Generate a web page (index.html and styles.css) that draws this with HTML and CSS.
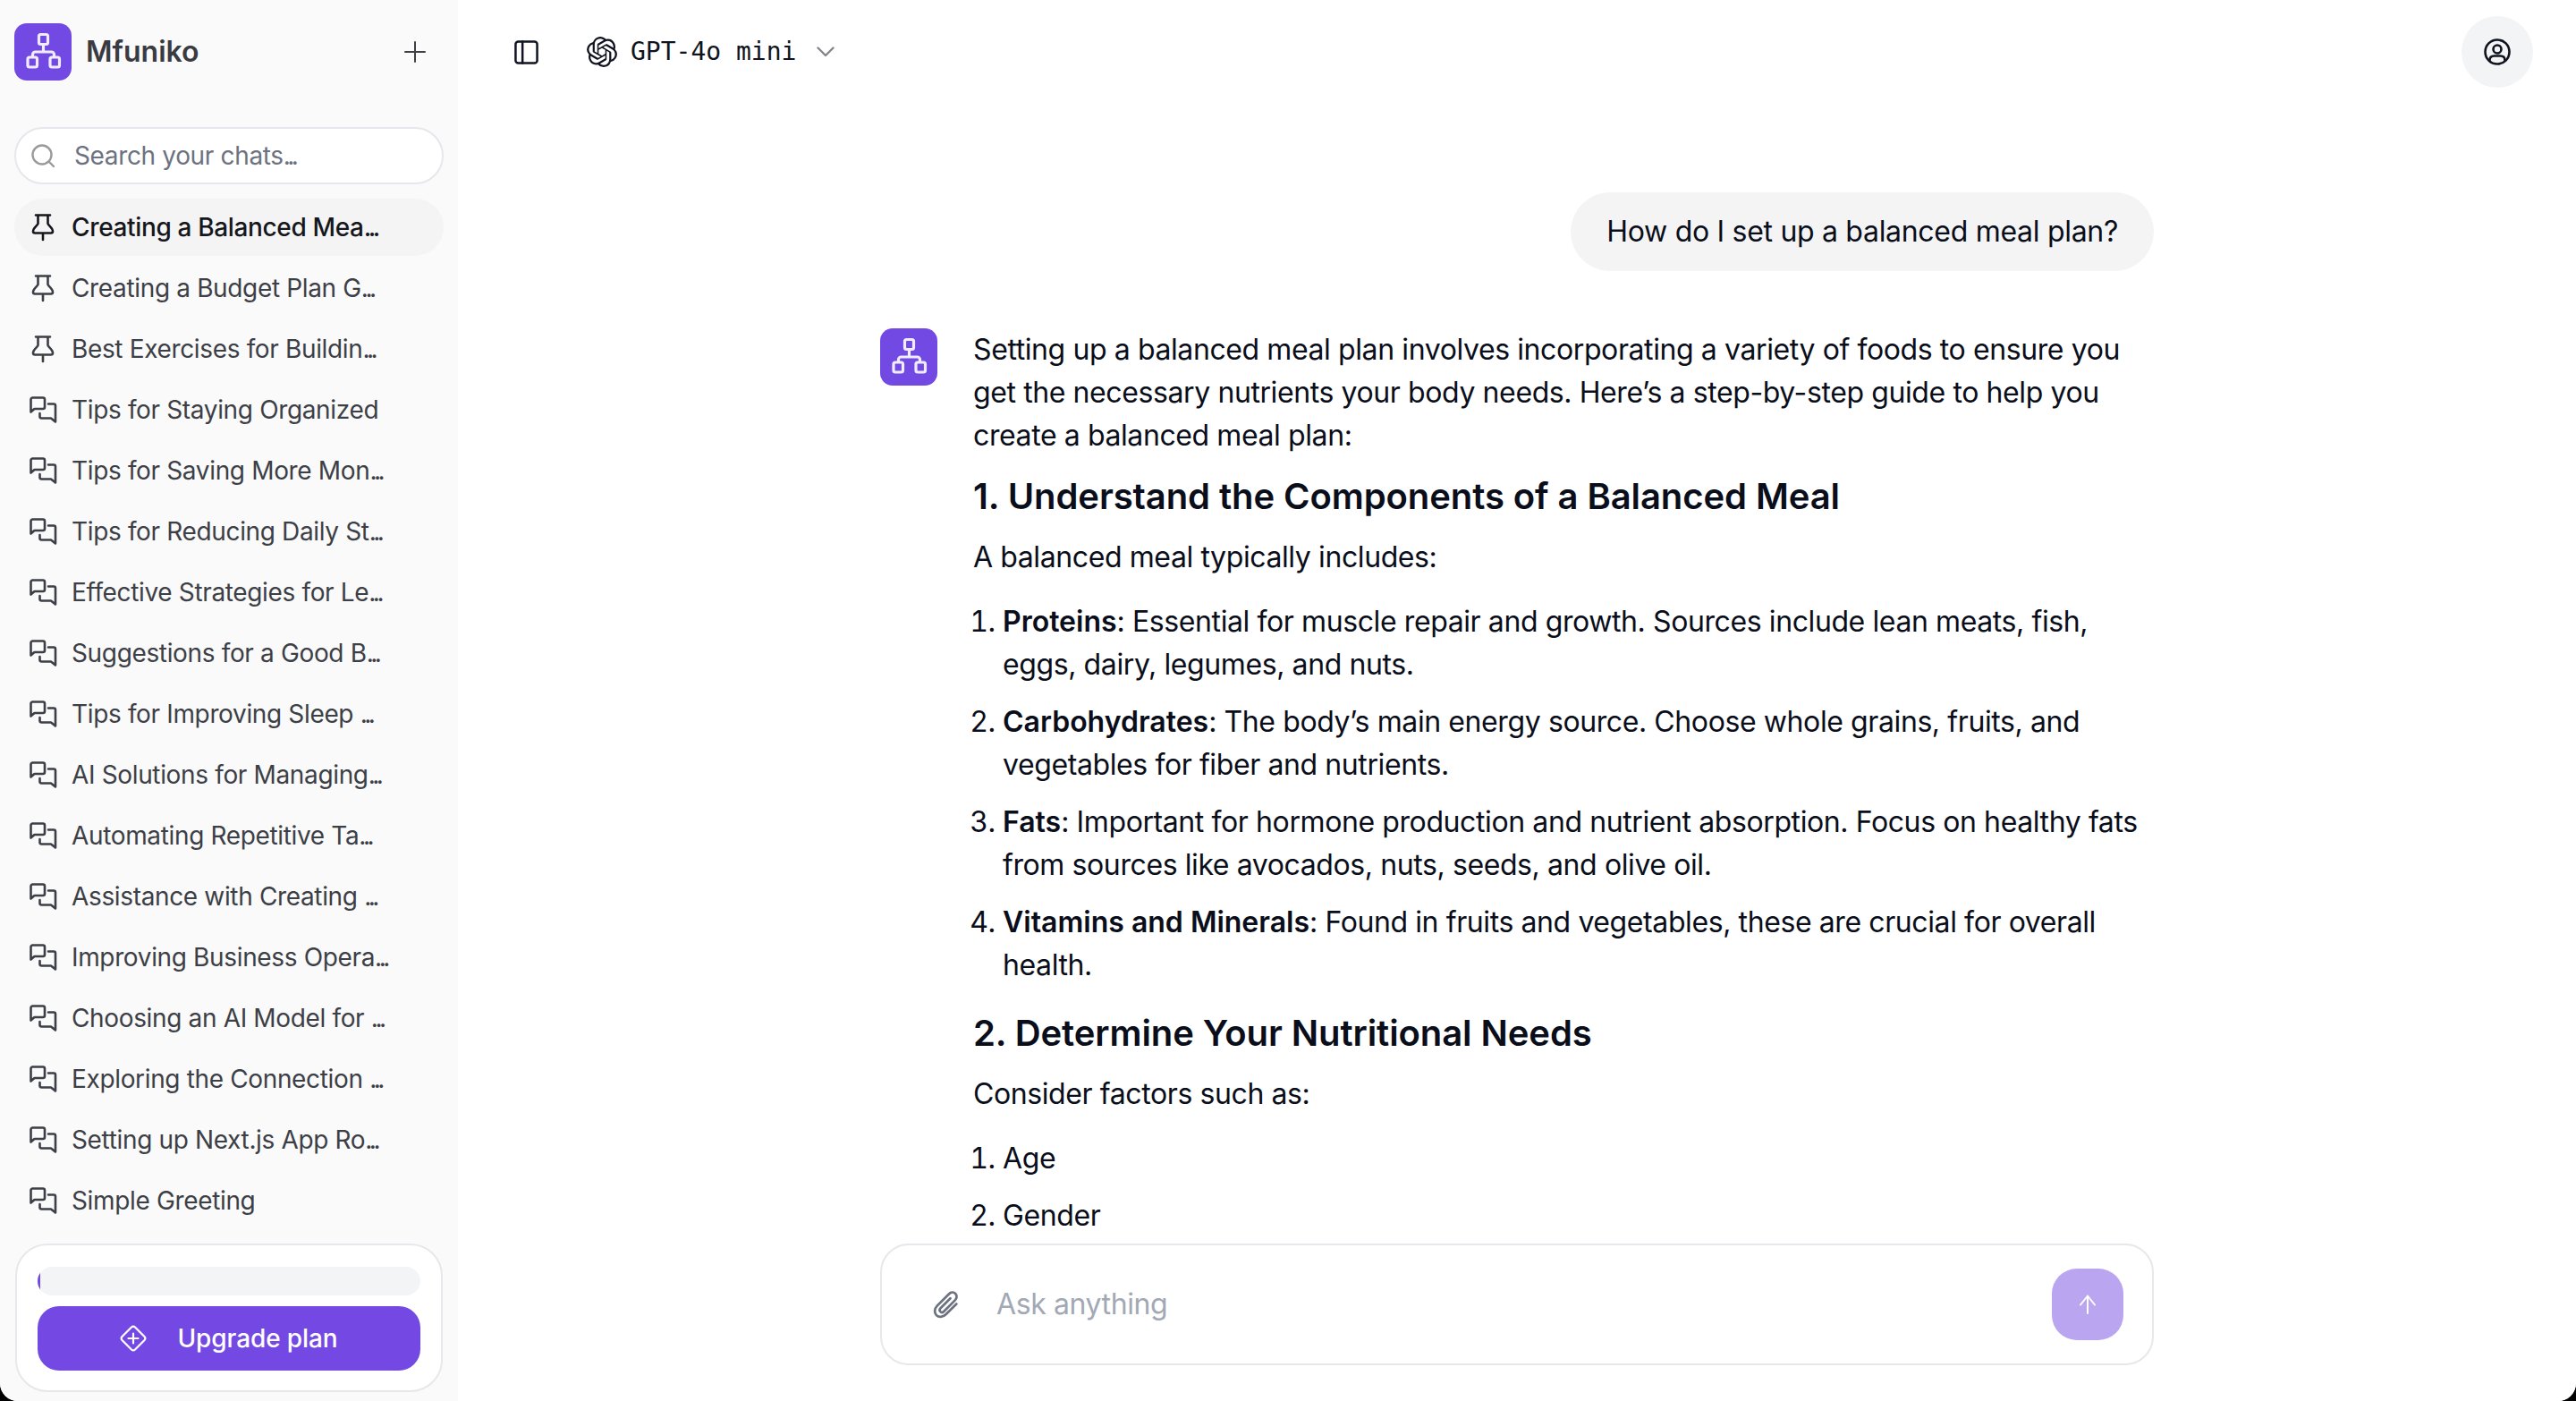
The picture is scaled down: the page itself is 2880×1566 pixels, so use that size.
FILE: index.html
```html
<!DOCTYPE html>
<html lang="en">
<head>
    <meta charset="UTF-8">
    <meta name="viewport" content="width=device-width, initial-scale=1.0">
    <title>Mfuniko</title>
    <link rel="stylesheet" href="styles.css">
</head>
<body>
    <svg class="defs" aria-hidden="true">
        <symbol id="pin" viewBox="0 0 32 32">
            <path d="M8 2.500h16M10.500 2.500v9.500c0 1.500-5.500 4.500-5.500 8.500 0 1.200.8 2 2 2h18c1.200 0 2-.8 2-2 0-4-5.500-7-5.500-8.500V2.500M16 22.500v7.500"/>
        </symbol>
        <symbol id="chat" viewBox="0 0 32 32">
            <path d="M2.500 18.500V4.500a2 2 0 0 1 2-2h11.500a2 2 0 0 1 2 2v8.500a2 2 0 0 1-2 2H6.500zM22 9.500h6a2 2 0 0 1 2 2v18l-5-4H14.500a2 2 0 0 1-2-2V20"/>
        </symbol>
        <symbol id="tree" viewBox="0 0 64 64">
            <path d="M27.500 14.500a2 2 0 0 1 2-2h6a2 2 0 0 1 2 2v7a2 2 0 0 1-2 2h-6a2 2 0 0 1-2-2zM15 40a2 2 0 0 1 2-2h6.500a2 2 0 0 1 2 2v7a2 2 0 0 1-2 2H17a2 2 0 0 1-2-2zM40 40a2 2 0 0 1 2-2h6.500a2 2 0 0 1 2 2v7a2 2 0 0 1-2 2H42a2 2 0 0 1-2-2zM32.500 23.500V32M20.500 38v-3a3 3 0 0 1 3-3h18a3 3 0 0 1 3 3v3"/>
        </symbol>
    </svg>

    <div class="app">
        <aside class="sidebar">
            <div class="brand">
                <span class="logo"><svg><use href="#tree"/></svg></span>
                <span class="brand-name">Mfuniko</span>
                <svg class="new-chat" viewBox="0 0 24 24"><path d="M12 1v22M1 12h22"/></svg>
            </div>

            <label class="search">
                <svg viewBox="0 0 28 28"><circle cx="13" cy="13" r="10.500"/><path d="M21 21l5 5"/></svg>
                <span>Search your chats<i>...</i></span>
            </label>

            <ul class="chats">
                <li class="chat active"><svg><use href="#pin"/></svg><span>Creating a Balanced Mea<i>...</i></span></li>
                <li class="chat"><svg><use href="#pin"/></svg><span>Creating a Budget Plan G<i>...</i></span></li>
                <li class="chat"><svg><use href="#pin"/></svg><span>Best Exercises for Buildin<i>...</i></span></li>
                <li class="chat"><svg><use href="#chat"/></svg><span>Tips for Staying Organized</span></li>
                <li class="chat"><svg><use href="#chat"/></svg><span>Tips for Saving More Mon<i>...</i></span></li>
                <li class="chat"><svg><use href="#chat"/></svg><span>Tips for Reducing Daily St<i>...</i></span></li>
                <li class="chat"><svg><use href="#chat"/></svg><span>Effective Strategies for Le<i>...</i></span></li>
                <li class="chat"><svg><use href="#chat"/></svg><span>Suggestions for a Good B<i>...</i></span></li>
                <li class="chat"><svg><use href="#chat"/></svg><span>Tips for Improving Sleep <i>...</i></span></li>
                <li class="chat"><svg><use href="#chat"/></svg><span>AI Solutions for Managing<i>...</i></span></li>
                <li class="chat"><svg><use href="#chat"/></svg><span>Automating Repetitive Ta<i>...</i></span></li>
                <li class="chat"><svg><use href="#chat"/></svg><span>Assistance with Creating <i>...</i></span></li>
                <li class="chat"><svg><use href="#chat"/></svg><span>Improving Business Opera<i>...</i></span></li>
                <li class="chat"><svg><use href="#chat"/></svg><span>Choosing an AI Model for <i>...</i></span></li>
                <li class="chat"><svg><use href="#chat"/></svg><span>Exploring the Connection <i>...</i></span></li>
                <li class="chat"><svg><use href="#chat"/></svg><span>Setting up Next.js App Ro<i>...</i></span></li>
                <li class="chat"><svg><use href="#chat"/></svg><span>Simple Greeting</span></li>
            </ul>

            <div class="upgrade">
                <div class="usage"><div class="usage-fill"></div></div>
                <button class="upgrade-btn">
                    <svg viewBox="0 0 30 30"><path d="M13 2.500a3 3 0 0 1 4 0L27.500 13a3 3 0 0 1 0 4L17 27.500a3 3 0 0 1-4 0L2.500 17a3 3 0 0 1 0-4zM15 9.500v11M9.500 15h11"/></svg>
                    Upgrade plan
                </button>
            </div>
        </aside>

        <main class="main">
            <header class="topbar">
                <svg class="panel-icon" viewBox="0 0 28 28"><rect x="1.500" y="1.500" width="25" height="25" rx="3"/><path d="M9.500 1.500v25"/></svg>
                <div class="model">
                    <svg viewBox="0 0 24 24"><path d="M22.2819 9.8211a5.9847 5.9847 0 0 0-.5157-4.9108 6.0462 6.0462 0 0 0-6.5098-2.9A6.0651 6.0651 0 0 0 4.9807 4.1818a5.9847 5.9847 0 0 0-3.9977 2.9 6.0462 6.0462 0 0 0 .7427 7.0966 5.98 5.98 0 0 0 .511 4.9107 6.051 6.051 0 0 0 6.5146 2.9001A5.9847 5.9847 0 0 0 13.2599 24a6.0557 6.0557 0 0 0 5.7718-4.2058 5.9894 5.9894 0 0 0 3.9977-2.9001 6.0557 6.0557 0 0 0-.7475-7.0729zm-9.022 12.6081a4.4755 4.4755 0 0 1-2.8764-1.0408l.1419-.0804 4.7783-2.7582a.7948.7948 0 0 0 .3927-.6813v-6.7369l2.02 1.1686a.071.071 0 0 1 .038.052v5.5826a4.504 4.504 0 0 1-4.4945 4.4944zm-9.6607-4.1254a4.4708 4.4708 0 0 1-.5346-3.0137l.142.0852 4.783 2.7582a.7712.7712 0 0 0 .7806 0l5.8428-3.3685v2.3324a.0804.0804 0 0 1-.0332.0615L9.74 19.9502a4.4992 4.4992 0 0 1-6.1408-1.6464zM2.3408 7.8956a4.485 4.485 0 0 1 2.3655-1.9728V11.6a.7664.7664 0 0 0 .3879.6765l5.8144 3.3543-2.0201 1.1685a.0757.0757 0 0 1-.071 0l-4.8303-2.7865A4.504 4.504 0 0 1 2.3408 7.872zm16.5963 3.8558L13.1038 8.364 15.1192 7.2a.0757.0757 0 0 1 .071 0l4.8303 2.7913a4.4944 4.4944 0 0 1-.6765 8.1042v-5.6772a.79.79 0 0 0-.407-.667zm2.0107-3.0231l-.142-.0852-4.7735-2.7818a.7759.7759 0 0 0-.7854 0L9.409 9.2297V6.8974a.0662.0662 0 0 1 .0284-.0615l4.8303-2.7866a4.4992 4.4992 0 0 1 6.6802 4.66zM8.3065 12.863l-2.02-1.1638a.0804.0804 0 0 1-.038-.0567V6.0742a4.4992 4.4992 0 0 1 7.3757-3.4537l-.142.0805L8.704 5.459a.7948.7948 0 0 0-.3927.6813zm1.0976-2.3654l2.602-1.4998 2.6069 1.4998v2.9994l-2.5974 1.4997-2.6067-1.4997Z"/></svg>
                    <span class="model-name">GPT-4o mini</span>
                    <svg class="chevron" viewBox="0 0 20 12"><path d="M1.500 1.500L10 10l8.500-8.500"/></svg>
                </div>
                <button class="account">
                    <svg viewBox="0 0 30 30"><circle cx="15" cy="15" r="13.500"/><circle cx="15" cy="12" r="4.500"/><path d="M6.500 24.500c0-3.500 2-5 5-5h7c3 0 5 1.500 5 5"/></svg>
                </button>
            </header>

            <section class="thread">
                <div class="column">
                    <div class="user-row"><div class="bubble">How do I set up a balanced meal plan?</div></div>
                    <div class="reply">
                        <span class="logo"><svg><use href="#tree"/></svg></span>
                        <div class="reply-text">
                            <p>Setting up a balanced meal plan involves incorporating a variety of foods to ensure you get the necessary nutrients your body needs. Here’s a step-by-step guide to help you create a balanced meal plan:</p>
                            <h3>1. Understand the Components of a Balanced Meal</h3>
                            <p>A balanced meal typically includes:</p>
                            <ol>
                                <li><strong>Proteins</strong>: Essential for muscle repair and growth. Sources include lean meats, fish, eggs, dairy, legumes, and nuts.</li>
                                <li><strong>Carbohydrates</strong>: The body’s main energy source. Choose whole grains, fruits, and vegetables for fiber and nutrients.</li>
                                <li><strong>Fats</strong>: Important for hormone production and nutrient absorption. Focus on healthy fats from sources like avocados, nuts, seeds, and olive oil.</li>
                                <li><strong>Vitamins and Minerals</strong>: Found in fruits and vegetables, these are crucial for overall health.</li>
                            </ol>
                            <h3>2. Determine Your Nutritional Needs</h3>
                            <p>Consider factors such as:</p>
                            <ol>
                                <li>Age</li>
                                <li>Gender</li>
                            </ol>
                        </div>
                    </div>
                </div>
            </section>

            <footer class="composer-wrap">
                <div class="composer">
                    <svg class="clip" viewBox="0 0 30 30"><path d="M25 14.500L14.500 25c-2.800 2.800-7 3-9.300.700s-2-6.500.700-9.300L17.500 4.800c1.900-1.900 4.800-2.100 6.500-.4s1.500 4.600-.4 6.500L12.500 22c-1 1-2.500 1.100-3.400.2s-.8-2.400.2-3.400L19 9"/></svg>
                    <span class="placeholder">Ask anything</span>
                    <button class="send">
                        <svg viewBox="0 0 24 24"><path d="M12 22V2.500M4 12.500l8-10 8 10"/></svg>
                    </button>
                </div>
            </footer>
        </main>
    </div>
</body>
</html>
```

FILE: styles.css
```css
* {
    box-sizing: border-box;
}

html, body {
    height: 100%;
    margin: 0;
    background-color: #000;
}

body {
    font-family: 'Inter', 'Liberation Sans', sans-serif;
    font-size: 32px;
    line-height: 48px;
    letter-spacing: -0.4px;
    color: #0a0e1a;
}

svg {
    display: block;
    fill: none;
    stroke: currentColor;
    stroke-linecap: round;
    stroke-linejoin: round;
}

button {
    font: inherit;
    letter-spacing: inherit;
    border: none;
    padding: 0;
}

.defs {
    display: none;
}

.app {
    display: flex;
    height: 100%;
    overflow: hidden;
    background-color: #fff;
    border-radius: 0 0 20px 20px;
}

/* sidebar */
.sidebar {
    width: 512px;
    flex-shrink: 0;
    display: flex;
    flex-direction: column;
    padding: 26px 16px 10px;
    background-color: #fafafa;
    letter-spacing: -0.35px;
}

/* the trailing dots sit tight together */
.sidebar i {
    font-style: normal;
    letter-spacing: -3.5px;
}

.brand {
    display: flex;
    align-items: center;
    height: 64px;
    margin-bottom: 52px;
}

.logo {
    display: block;
    width: 64px;
    height: 64px;
    flex-shrink: 0;
    border-radius: 14px;
    background-color: #7249e2;
    color: #f1ecfd;
}

.logo svg {
    width: 64px;
    height: 64px;
    stroke-width: 3.2;
}

.brand-name {
    margin-left: 16px;
    font-size: 32px;
    font-weight: 600;
    letter-spacing: 0;
    color: #3a3b42;
}

.new-chat {
    width: 24px;
    height: 24px;
    margin-left: auto;
    margin-right: 20px;
    color: #3f4046;
    stroke-width: 2;
}

.search {
    display: flex;
    align-items: center;
    gap: 21px;
    height: 64px;
    padding-left: 16px;
    border: 2px solid #e6e7ec;
    border-radius: 32px;
    background-color: #fff;
    font-size: 28px;
    color: #6c7280;
}

.search svg {
    width: 28px;
    height: 28px;
    color: #9a9a9a;
    stroke-width: 2.4;
}

.chats {
    list-style: none;
    margin: 16px 0 0;
    padding: 0;
    display: flex;
    flex-direction: column;
    gap: 4px;
    flex: 1;
    min-height: 0;
}

.chat {
    display: flex;
    align-items: center;
    gap: 16px;
    height: 64px;
    padding-left: 16px;
    border-radius: 32px;
    font-size: 28px;
    white-space: pre;
    color: #3d3f47;
}

.chat svg {
    width: 32px;
    height: 32px;
    stroke-width: 2.6;
}

.chat.active {
    background-color: #f4f4f5;
    font-weight: 500;
    color: #16171c;
}

.upgrade {
    height: 166px;
    padding: 24px 23px 0;
    border: 2px solid #e8e8ec;
    border-radius: 36px;
    background-color: #fff;
    margin: 0 1px;
}

.usage {
    height: 32px;
    border-radius: 16px;
    background-color: #f3f4f6;
    overflow: hidden;
}

.usage-fill {
    width: 3px;
    height: 100%;
    background-color: #7249e2;
}

.upgrade-btn {
    display: flex;
    align-items: center;
    justify-content: center;
    gap: 34px;
    width: 100%;
    height: 72px;
    margin-top: 12px;
    border-radius: 24px;
    background-color: #7449e3;
    color: #fff;
    font-size: 28px;
    font-weight: 500;
    letter-spacing: -0.1px;
}

.upgrade-btn svg {
    width: 30px;
    height: 30px;
    stroke-width: 2.2;
}

/* main column */
.main {
    flex: 1;
    min-width: 0;
    display: flex;
    flex-direction: column;
    background-color: #fff;
}

.topbar {
    display: flex;
    align-items: center;
    height: 116px;
    flex-shrink: 0;
    padding: 0 48px 0 63px;
    color: #0f1420;
}

.panel-icon {
    width: 27px;
    height: 27px;
    stroke-width: 2.6;
}

.model {
    display: flex;
    align-items: center;
    margin-left: 54px;
}

.model svg {
    width: 34px;
    height: 34px;
    fill: currentColor;
    stroke: none;
}

.model .chevron {
    width: 20px;
    height: 12px;
    margin-left: 23px;
    fill: none;
    stroke: #85868c;
    stroke-width: 2.4;
}

.model-name {
    margin-left: 15px;
    font-family: 'DejaVu Sans Mono', 'Liberation Mono', monospace;
    font-size: 28px;
    letter-spacing: 0;
}

.account {
    display: flex;
    align-items: center;
    justify-content: center;
    width: 80px;
    height: 80px;
    margin-left: auto;
    border-radius: 50%;
    background-color: #f3f4f6;
    color: #10141f;
}

.account svg {
    width: 30px;
    height: 30px;
    stroke-width: 2.6;
}

.thread {
    flex: 1;
    min-height: 0;
    overflow: hidden;
}

.column {
    width: 1424px;
    margin: 0 auto;
    padding-top: 99px;
}

.user-row {
    display: flex;
    justify-content: flex-end;
    margin-bottom: 64px;
}

.bubble {
    padding: 20px 40px;
    border-radius: 44px;
    background-color: #f4f4f5;
    letter-spacing: -0.3px;
}

.reply {
    display: flex;
    gap: 40px;
}

.reply-text p {
    margin: 0;
}

.reply-text h3 {
    margin: 16px 0;
    font-size: 40px;
    line-height: 56px;
    font-weight: 600;
    letter-spacing: -0.08px;
}

.reply-text ol {
    margin: 24px 0 0;
    padding-left: 33px;
}

.reply-text li + li {
    margin-top: 16px;
}

.reply-text ol + h3 {
    margin-top: 24px;
}

.reply-text strong {
    font-weight: 600;
    letter-spacing: 0;
}

.composer-wrap {
    flex-shrink: 0;
    padding-bottom: 40px;
}

.composer {
    display: flex;
    align-items: center;
    width: 1424px;
    height: 136px;
    margin: 0 auto;
    padding: 0 32px 0 55px;
    border: 2px solid #e7e7ec;
    border-radius: 32px;
    background-color: #fff;
}

.clip {
    width: 34px;
    height: 34px;
    color: #6c7280;
    stroke-width: 2.4;
}

.placeholder {
    margin-left: 39px;
    color: #a2a8b4;
}

.send {
    display: flex;
    align-items: center;
    justify-content: center;
    width: 80px;
    height: 80px;
    margin-left: auto;
    border-radius: 28px;
    background-color: #b9a5f0;
    color: #fff;
}

.send svg {
    width: 24px;
    height: 24px;
    stroke-width: 2;
}
```
